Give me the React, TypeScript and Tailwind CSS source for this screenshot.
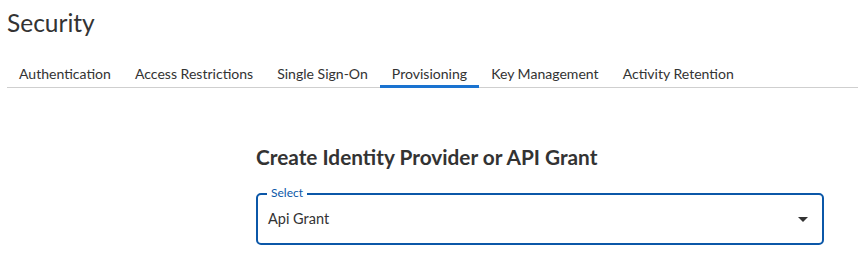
import React from "react";

const tabs = [
  "Authentication",
  "Access Restrictions",
  "Single Sign-On",
  "Provisioning",
  "Key Management",
  "Activity Retention",
];

export default function App() {
  return (
    <div
      className="w-[858px] h-[278px] bg-white text-[#333333] pl-[7px] pt-[6px]"
      style={{ fontFamily: "Lato, 'Open Sans', sans-serif" }}
    >
      <h1 className="text-[24.5px] leading-[34px] font-normal text-[#333333]">Security</h1>
      <div className="mt-[24px] flex border-b border-[#cfcfcf]">
        {tabs.map((t) => (
          <div
            key={t}
            className={
              t === "Provisioning"
                ? "px-3 pb-[1px] text-[14.05px] leading-[20px] text-[#333333] border-b-[3px] border-[#1a73d0] -mb-[1px]"
                : "px-3 pb-[3px] text-[14.05px] leading-[20px] text-[#333333]"
            }
          >
            {t}
          </div>
        ))}
      </div>
      <div className="ml-[249px] w-[568px] mt-[56px]">
        <h2 className="text-[20.8px] leading-[26px] font-bold text-[#333333]">
          Create Identity Provider or API Grant
        </h2>
        <div className="relative mt-[23px] h-[52px] rounded-[5px] border-2 border-[#0b57a8] flex items-center pl-[10px] pr-[14px]">
          <span className="absolute -top-[9px] left-[9px] bg-white px-[4px] text-[12px] leading-[14px] text-[#0b57a8]">
            Select
          </span>
          <span className="flex-1 text-[14.5px] text-[#333333]">Api Grant</span>
          <svg width="10" height="5" viewBox="0 0 10 5" className="mt-[1px]">
            <path d="M0 0 L10 0 L5 5 Z" fill="#333333" />
          </svg>
        </div>
      </div>
    </div>
  );
}
